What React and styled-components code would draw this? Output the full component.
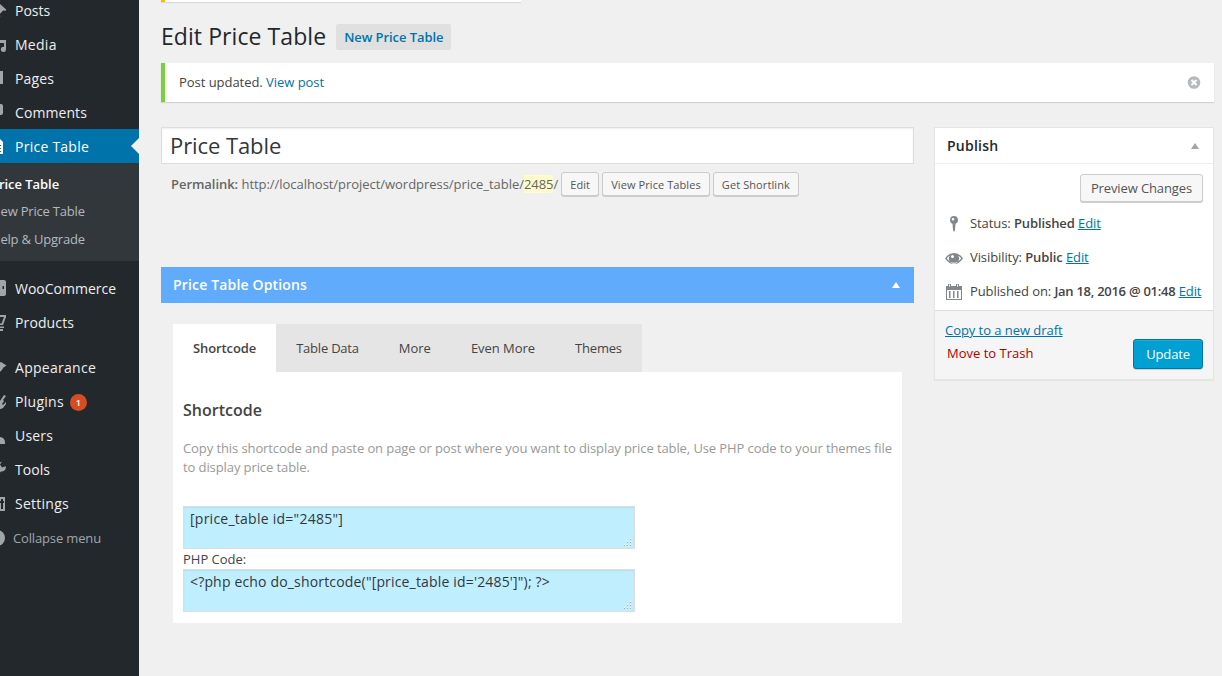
import React from 'react';
import styled, { createGlobalStyle } from 'styled-components';

const GlobalStyle = createGlobalStyle`
  * { box-sizing: border-box; }
  html, body { margin: 0; padding: 0; }
  body {
    background: #f0f0f0;
    font: 13px/18px "Open Sans", sans-serif;
    color: #444;
    overflow: hidden;
  }
  strong { font-weight: 600; }
`;

const Page = styled.div`
  display: flex;
  width: 1222px;
  height: 676px;
  overflow: hidden;
`;

const Sidebar = styled.nav`
  flex: 0 0 139px;
  background: #23282d;
  overflow: hidden;
`;

const MenuList = styled.ul`
  list-style: none;
  margin: ${(p) => p.$offset || 0}px 0 0;
  padding: 0;
`;

const MenuItem = styled.li`
  display: flex;
  align-items: center;
  justify-content: space-between;
  height: 34px;
  margin-top: ${(p) => p.$gap || 0}px;
  background: ${(p) => (p.$current ? '#0073aa' : 'transparent')};
  color: ${(p) => (p.$current ? '#fff' : '#eee')};
  font-size: ${(p) => p.$size || 14}px;
  letter-spacing: ${(p) => p.$track || 0}px;
`;

const MenuLink = styled.a`
  display: flex;
  align-items: center;
  padding-top: ${(p) => p.$drop || 0}px;
  color: inherit;
`;

const MenuIcon = styled.svg`
  flex: none;
  width: 20px;
  height: 20px;
  margin: 0 8px 0 -13px;
  fill: ${(p) => (p.$bright ? '#fff' : '#a0a5aa')};
`;

const Muted = styled.span`
  color: #a0a5aa;
  margin-left: -2px;
`;

const CurrentArrow = styled.span`
  border: 8px solid transparent;
  border-right-color: #f0f0f0;
  border-left: 0;
`;

const Count = styled.span`
  width: 17px;
  height: 17px;
  margin: 1px 0 0 6px;
  border-radius: 50%;
  background: #d54e21;
  color: #fff;
  font-size: 9px;
  font-weight: 600;
  letter-spacing: 0;
  line-height: 17px;
  text-align: center;
`;

const Submenu = styled.ul`
  list-style: none;
  margin: 0;
  padding: 8px 0 7px;
  height: 98px;
  background: #32373c;
`;

const SubmenuItem = styled.li`
  height: ${(p) => (p.$current ? 27 : 28)}px;
  line-height: 27.5px;
  margin-left: -9px;
  white-space: nowrap;
  color: ${(p) => (p.$current ? '#fff' : '#b4b9be')};
  font-weight: ${(p) => (p.$current ? 600 : 400)};
  letter-spacing: ${(p) => (p.$current ? -0.05 : -0.2)}px;
`;

const Main = styled.main`
  flex: 1;
  padding: 0 8px 0 22px;
`;

const Notice = styled.div`
  background: #fff;
  border-left: 4px solid ${(p) => p.$accent};
  box-shadow: 0 1px 1px rgba(0, 0, 0, 0.12);
`;

const UpperNotice = styled(Notice)`
  width: 360px;
  height: 2px;
`;

const Header = styled.header`
  display: flex;
  align-items: center;
  height: 61px;
  padding-top: 8px;
`;

const Heading = styled.h1`
  margin: 0;
  color: #23282d;
  font-size: 23px;
  font-weight: 400;
  letter-spacing: 0.07px;
  line-height: 29px;
`;

const NewButton = styled.a`
  height: 26px;
  margin-left: 10px;
  padding: 0 8px;
  border-radius: 2px;
  background: #e0e0e0;
  color: #0073aa;
  font-weight: 600;
  letter-spacing: -0.07px;
  line-height: 26px;
`;

const UpdatedNotice = styled(Notice)`
  display: flex;
  align-items: center;
  justify-content: space-between;
  height: 39px;
  padding: 0 13px 0 14px;
`;

const NoticeText = styled.span`
  padding-bottom: 2px;
  letter-spacing: -0.04px;
`;

const Link = styled.a`
  color: #0073aa;
  text-decoration: ${(p) => (p.$underline ? 'underline' : 'none')};
`;

const Columns = styled.div`
  display: flex;
  align-items: flex-start;
  gap: 20px;
  margin-top: 25px;
`;

const Editor = styled.section`
  width: 753px;
`;

const TitleField = styled.div`
  height: 37px;
  padding-left: 8px;
  border: 1px solid #ddd;
  background: #fff;
  box-shadow: inset 0 1px 2px rgba(0, 0, 0, 0.07);
  color: #32373c;
  font-size: 22px;
  letter-spacing: -0.08px;
  line-height: 35px;
`;

const Permalink = styled.div`
  display: flex;
  align-items: center;
  height: 24px;
  margin-top: 8px;
  padding-left: 10px;
  color: #666;
  letter-spacing: -0.043px;
`;

const Slug = styled.span`
  background: #fffbcc;
`;

const SmallButtons = styled.div`
  display: flex;
  gap: 3px;
  margin-left: 3px;
`;

const Button = styled.button`
  height: ${(p) => (p.$small ? 24 : 28)}px;
  padding: 0 ${(p) => (p.$small ? 8 : 10)}px ${(p) => (p.$small ? 0 : 1)}px;
  border: 1px solid #ccc;
  border-radius: 3px;
  background: #f7f7f7;
  box-shadow: 0 1px 0 #ccc;
  color: #555;
  font: ${(p) => (p.$small ? 11 : 13)}px "Open Sans", sans-serif;
  letter-spacing: ${(p) => (p.$small ? 0.09 : -0.12)}px;
  white-space: nowrap;
`;

const UpdateButton = styled(Button)`
  height: 30px;
  padding: 0 12px;
  border-color: #0073aa;
  background: #00a0d2;
  box-shadow: inset 0 1px 0 rgba(120, 200, 230, 0.3), 0 1px 0 rgba(0, 0, 0, 0.15);
  color: #fff;
`;

const OptionsHeader = styled.h2`
  display: flex;
  align-items: center;
  justify-content: space-between;
  height: 36px;
  margin: 71px 0 0;
  padding: 0 14px 0 12px;
  background: #61abfd;
  color: #fff;
  font-size: 14px;
  font-weight: 600;
  letter-spacing: 0.16px;
`;

const Caret = styled.span`
  border: 4px solid transparent;
  border-top: 0;
  border-bottom: 6px solid ${(p) => p.$color};
`;

const Tabs = styled.div`
  display: inline-flex;
  height: 48px;
  margin: 21px 0 0 12px;
  background: #e5e5e5;
  vertical-align: top;
`;

const Tab = styled.div`
  padding: 0 20px;
  background: ${(p) => (p.$active ? '#fff' : 'transparent')};
  font-weight: ${(p) => (p.$active ? 600 : 400)};
  letter-spacing: ${(p) => p.$track || 0}px;
  line-height: 49px;
`;

const TabPanel = styled.div`
  height: 251px;
  margin: 0 12px;
  padding: 27px 10px 0;
  background: #fff;
`;

const PanelTitle = styled.h3`
  margin: 0;
  font-size: 16px;
  font-weight: 600;
  line-height: 22px;
`;

const Help = styled.p`
  margin: 18px 0 0;
  color: #999;
  letter-spacing: -0.092px;
  line-height: 19px;
  white-space: nowrap;
`;

const CodeBox = styled.div`
  display: flex;
  justify-content: space-between;
  align-items: flex-end;
  width: 452px;
  height: 43px;
  border: 1px solid #ddd;
  background: #bfefff;
  box-shadow: inset 0 1px 2px rgba(0, 0, 0, 0.07);
`;

const CodeText = styled.code`
  align-self: flex-start;
  padding: 2px 6px;
  color: #32373c;
  font: 14px/20px "Open Sans", sans-serif;
  letter-spacing: ${(p) => p.$track}px;
`;

const Grip = styled.svg`
  width: 9px;
  height: 9px;
  margin: 0 2px 1px 0;
`;

const CodeStack = styled.div`
  margin-top: 29px;
`;

const CodeLabel = styled.div`
  height: 20px;
  line-height: 21px;
`;

const PublishBox = styled.aside`
  width: 280px;
  height: 253px;
  border: 1px solid #e5e5e5;
  background: #fff;
  box-shadow: 0 1px 1px rgba(0, 0, 0, 0.04);
`;

const PublishHeader = styled.h2`
  display: flex;
  align-items: center;
  justify-content: space-between;
  height: 36px;
  margin: 0;
  padding: 0 14px 0 12px;
  border-bottom: 1px solid #eee;
  color: #23282d;
  font-size: 14px;
  font-weight: 600;
  letter-spacing: 0.25px;
`;

const PreviewRow = styled.div`
  display: flex;
  justify-content: flex-end;
  height: 43px;
  padding: 10px 10px 0 0;
`;

const StatusRow = styled.div`
  display: flex;
  align-items: center;
  height: 34px;
  padding-left: 10px;
  white-space: pre;
`;

const StatusIcon = styled.svg`
  width: 18px;
  height: 18px;
  margin-right: 7px;
  fill: #82878c;
`;

const StatusText = styled.span`
  padding-bottom: 2px;
  letter-spacing: -0.09px;

  strong {
    letter-spacing: ${(p) => p.$strongTrack}px;
  }
`;

const PublishFooter = styled.footer`
  display: flex;
  justify-content: space-between;
  height: 69px;
  margin-top: 1px;
  padding: 8px 10px 0;
  border-top: 1px solid #ddd;
  background: #f5f5f5;
`;

const FooterLinks = styled.div`
  display: flex;
  flex-direction: column;
  letter-spacing: -0.05px;
  line-height: 23px;
`;

const Trash = styled.a`
  margin-left: 2px;
  color: #a00;
  letter-spacing: 0;
`;

const FooterAction = styled.div`
  padding-top: 20px;
`;

const glyphs = {
  posts: <path d="M10.4 2l1.1-.3 7.9 7-1.3 1.2-1.6-.6-3.6 3.5.3 3-1.3 1-3.3-3.6L3 17l4-5.7L3.600 8l1-1.200 3 .3z" />,
  media: <path d="M2 2h8v4H4v9H2zM11 5h8v9.500a2.600 2.600 0 1 1-2-2.600V8h-4v6.500a2.600 2.600 0 1 1-2-2.600z" />,
  pages: <path d="M4 2h12v13H4z" />,
  comments: <path d="M5 1h9q2 0 2 2v7q0 2-2 2h-4l-4 4v-4H5q-2 0-2-2V3q0-2 2-2z" />,
  table: <path fillRule="evenodd" d="M4 2h9l3 3v12H4zM6 8v1h8V8zM6 11v1h8v-1zM6 14v1h8v-1z" />,
  woo: <path fillRule="evenodd" d="M3 1h14q2 0 2 2v12q0 2-2 2H3q-2 0-2-2V3q0-2 2-2zM15.500 7v3h1.500V7z" />,
  cart: <path fillRule="evenodd" d="M1 2h18v2l-3 8H6v1.500h11V15H4v-3L1 4zM8 4l1 6.500h5.500L17 4zM13 16h3v2h-3z" />,
  appearance: <path d="M7 3l5 2 2-1 5.500 3.500-3 2-2 3-5 4-6-6z" />,
  plugins: <path d="M17 3l2 1-3 4 1 1-2 3 1 1 3-3 0 2-3 4-5 2-5-5 4-5 3 1z" />,
  users: <path d="M9 4a3 3 0 1 1 0 6 3 3 0 0 1 0-6zM2 17q0-6 6-6h5q5 .5 5 5.500V18H2z" />,
  tools: <path d="M15 1.500l-2 3 2 3 3-1 1 0q0 5-5 5l-7 7-3-3 7-7q-1-5 4-7z" />,
  settings: <path fillRule="evenodd" d="M3 3h15v14H3zM14 5v2h-2v2h2v6h2V9h1V7h-1V5z" />,
  collapse: <path d="M10 2a8 8 0 1 1 0 16 8 8 0 0 1 0-16z" />,
};

const Glyph = ({ name, bright }) => (
  <MenuIcon viewBox="0 0 20 20" $bright={bright}>{glyphs[name]}</MenuIcon>
);

const topItems = [
  { icon: 'posts', label: 'Posts', track: 0 },
  { icon: 'media', label: 'Media', track: 0.28 },
  { icon: 'pages', label: 'Pages', track: 0.15 },
  { icon: 'comments', label: 'Comments', track: 0.08 },
];

const lowerItems = [
  { icon: 'woo', label: 'WooCommerce', gap: 11 },
  { icon: 'cart', label: 'Products', track: 0.12 },
  { icon: 'appearance', label: 'Appearance', gap: 11, track: 0.28 },
  { icon: 'plugins', label: 'Plugins', track: 0.28, count: 1 },
  { icon: 'users', label: 'Users', track: 0.2 },
  { icon: 'tools', label: 'Tools', track: 0.05 },
  { icon: 'settings', label: 'Settings', track: 0.25 },
];

const Entry = ({ icon, label, gap, track, count, drop }) => (
  <MenuItem $gap={gap} $track={track}>
    <MenuLink $drop={drop}>
      <Glyph name={icon} />
      {label}
      {count && <Count>{count}</Count>}
    </MenuLink>
  </MenuItem>
);

const Code = ({ children, track }) => (
  <CodeBox>
    <CodeText $track={track}>{children}</CodeText>
    <Grip viewBox="0 0 9 9" shapeRendering="crispEdges">
      <path fill="#fff" d="M7 0h1v1H7zM4 3h1v1H4zM7 3h1v1H7zM1 6h1v1H1zM4 6h1v1H4zM7 6h1v1H7z" />
      <path fill="#aaa" d="M7 1h1v1H7zM4 4h1v1H4zM7 4h1v1H7zM1 7h1v1H1zM4 7h1v1H4zM7 7h1v1H7z" />
    </Grip>
  </CodeBox>
);

export default function App() {
  return (
    <>
      <GlobalStyle />
      <Page>
        <Sidebar>
          <MenuList $offset={-7}>
            {topItems.map((item) => <Entry key={item.label} {...item} drop={2} />)}
            <MenuItem $current $track={0.25}>
              <MenuLink $drop={2}><Glyph name="table" bright />Price Table</MenuLink>
              <CurrentArrow />
            </MenuItem>
          </MenuList>
          <Submenu>
            <SubmenuItem $current>Price Table</SubmenuItem>
            <SubmenuItem>New Price Table</SubmenuItem>
            <SubmenuItem>Help &amp; Upgrade</SubmenuItem>
          </Submenu>
          <MenuList>
            {lowerItems.map((item) => <Entry key={item.label} {...item} />)}
            <MenuItem $size={13} $track={-0.15}>
              <MenuLink><Glyph name="collapse" /><Muted>Collapse menu</Muted></MenuLink>
            </MenuItem>
          </MenuList>
        </Sidebar>
        <Main>
          <UpperNotice $accent="#ffba00" />
          <Header>
            <Heading>Edit Price Table</Heading>
            <NewButton>New Price Table</NewButton>
          </Header>
          <UpdatedNotice $accent="#7ad03a">
            <NoticeText>Post updated. <Link>View post</Link></NoticeText>
            <svg width="14" height="14" viewBox="0 0 14 14">
              <circle cx="7" cy="6.500" r="6.300" fill="#b4b9be" />
              <path d="M4.500 4l5 5M9.500 4l-5 5" stroke="#fff" strokeWidth="2" />
            </svg>
          </UpdatedNotice>
          <Columns>
            <Editor>
              <TitleField>Price Table</TitleField>
              <Permalink>
                <span>
                  <strong>Permalink:</strong> http://localhost/project/wordpress/price_table/<Slug>2485</Slug>/
                </span>
                <SmallButtons>
                  <Button $small>Edit</Button>
                  <Button $small>View Price Tables</Button>
                  <Button $small>Get Shortlink</Button>
                </SmallButtons>
              </Permalink>
              <OptionsHeader>Price Table Options<Caret $color="#fff" /></OptionsHeader>
              <Tabs>
                <Tab $active $track={-0.1}>Shortcode</Tab>
                <Tab $track={-0.22}>Table Data</Tab>
                <Tab>More</Tab>
                <Tab $track={-0.04}>Even More</Tab>
                <Tab $track={-0.2}>Themes</Tab>
              </Tabs>
              <TabPanel>
                <PanelTitle>Shortcode</PanelTitle>
                <Help>
                  Copy this shortcode and paste on page or post where you want to display price table, Use PHP code to your themes file
                  <br />
                  to display price table.
                </Help>
                <CodeStack>
                  <Code track={0.25}>[price_table id="2485"]</Code>
                  <CodeLabel>PHP Code:</CodeLabel>
                  <Code track={0.17}>{'<?php echo do_shortcode("[price_table id=\'2485\']"); ?>'}</Code>
                </CodeStack>
              </TabPanel>
            </Editor>
            <PublishBox>
              <PublishHeader>Publish<Caret $color="#a0a5aa" /></PublishHeader>
              <PreviewRow><Button>Preview Changes</Button></PreviewRow>
              <StatusRow>
                <StatusIcon viewBox="0 0 18 18">
                  <path fillRule="evenodd" d="M9 1a4 4 0 0 1 1.500 7.700L10 15l-1 2-1-2-.5-6.300A4 4 0 0 1 9 1zM8 3a1.300 1.300 0 0 0 0 2.600A1.300 1.300 0 0 0 8 3z" />
                </StatusIcon>
                <StatusText $strongTrack={-0.1}>Status: <strong>Published</strong> <Link $underline>Edit</Link></StatusText>
              </StatusRow>
              <StatusRow>
                <StatusIcon viewBox="0 0 18 18">
                  <path fillRule="evenodd" d="M0 9.500Q3.500 4 9 4t9 5.500Q14 15 9 15T0 9.500zM1.800 9.500Q5 13.700 9 13.700t7.200-4.200Q15 7.700 13 6.500a5 5 0 1 1-8 0Q3 7.700 1.800 9.500zM7.500 6a1.500 1.500 0 0 0 0 3 1.500 1.500 0 0 0 0-3z" />
                </StatusIcon>
                <StatusText $strongTrack={-0.1}>Visibility: <strong>Public</strong> <Link $underline>Edit</Link></StatusText>
              </StatusRow>
              <StatusRow>
                <StatusIcon viewBox="0 0 18 18">
                  <path fillRule="evenodd" d="M1 3h2V1h3v2h1V3h4V1h3v2h3v14H1zM2 7v9h14V7zM4 1.500v2h1v-2zM12 1.500v2h1v-2zM4 8h1.500v7H4zM8 8h1.500v7H8zM12 8h1.500v7H12z" />
                </StatusIcon>
                <StatusText $strongTrack={-0.27}>Published on: <strong>Jan 18, 2016 @ 01:48</strong> <Link $underline>Edit</Link></StatusText>
              </StatusRow>
              <PublishFooter>
                <FooterLinks>
                  <Link $underline>Copy to a new draft</Link>
                  <Trash>Move to Trash</Trash>
                </FooterLinks>
                <FooterAction><UpdateButton>Update</UpdateButton></FooterAction>
              </PublishFooter>
            </PublishBox>
          </Columns>
        </Main>
      </Page>
    </>
  );
}
